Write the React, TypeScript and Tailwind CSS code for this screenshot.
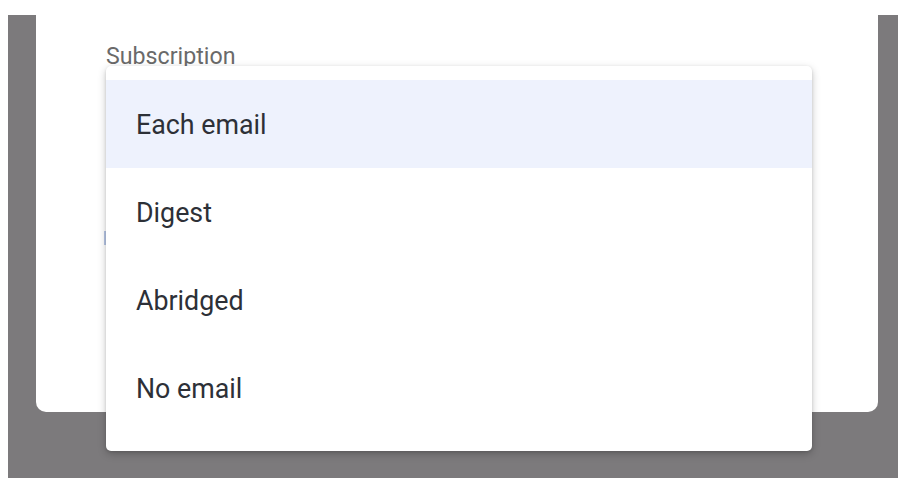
import React from "react"

const options = ["Each email", "Digest", "Abridged", "No email"]

function SubscriptionMenu({ selected }: { selected: string }) {
  return (
    <div className="absolute left-[106px] top-[66px] w-[706px] rounded-[5px] bg-white pt-[14px] pb-[19px] shadow-[0_3px_8px_rgba(0,0,0,0.22),0_1px_3px_rgba(0,0,0,0.12)]">
      {options.map((opt) => (
        <div
          key={opt}
          className={`flex h-[88px] items-center pl-[30px] pt-[3px] text-[26.8px] text-[#2d3037] ${
            opt === selected ? "bg-[#eef2fd]" : ""
          }`}
        >
          {opt}
        </div>
      ))}
    </div>
  )
}

export default function App() {
  return (
    <div className="relative h-[486px] w-[906px] overflow-hidden bg-white font-['Roboto',sans-serif]">
      <div className="ml-[8px] mt-[15px] h-[463px] w-[890px] bg-[#7c7a7c]">
        <div className="ml-[28px] h-[397px] w-[842px] rounded-b-[10px] bg-white pl-[70px] pt-[27px]">
          <div className="text-[23.2px] leading-[28px] text-[#6a6a6a]">Subscription</div>
        </div>
      </div>
      <div className="absolute left-[104px] top-[231px] h-[14px] w-[2px] bg-[#b7c7e6]" />
      <SubscriptionMenu selected="Each email" />
    </div>
  )
}
